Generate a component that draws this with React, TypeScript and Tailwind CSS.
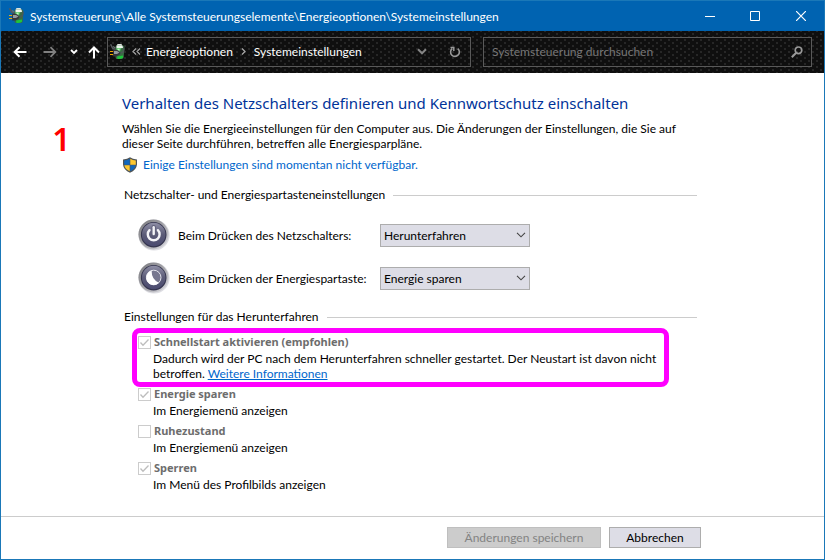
import React, { useState } from 'react';

const SHUTDOWN_OPTIONS = [
  { id: 'sleep', label: 'Energie sparen', hint: 'Im Energiemenü anzeigen', checked: true },
  { id: 'hibernate', label: 'Ruhezustand', hint: 'Im Energiemenü anzeigen', checked: false },
  { id: 'lock', label: 'Sperren', hint: 'Im Menü des Profilbilds anzeigen', checked: true },
];

const POWER_ACTIONS = ['Nichts unternehmen', 'Energie sparen', 'Ruhezustand', 'Herunterfahren'];

const BatteryIcon: React.FC = () => (
  <svg className="w-4 h-4 shrink-0" viewBox="0 0 16 16" aria-hidden="true">
    <path d="M.6.3 2.600 4.200 6 5.800" fill="none" stroke="#55595c" strokeWidth="1.500" />
    <path d="M3 2.500 5.500 4" stroke="#6a6e70" strokeWidth="1.300" />
    <rect x="7" y="0" width="5" height="3" rx="1" fill="#dfe6df" />
    <path d="M6.500 1.500h6.500q1.300 0 1.300 1.500l-.5 10q-.2 2-2 2H7q-1.500 0-1.500-2V3q0-1.500 1-1.500z" fill="#3a6b45" />
    <path d="M6.500 1.500h6l.5 2.500-6.500.5z" fill="#eef5ee" />
    <path d="M6.500 4.500 11 4 9.500 9H6z" fill="#5fd76c" />
    <path d="M7.800 4.800h1.800l-1 4H7.200z" fill="#c2f5c6" />
    <path d="M7 12.500 13 11.500v2.300q-2 1.500-5.500 1.200z" fill="#1fc63b" />
    <path d="M0 7.500h3.500M0 10.500h3.500" stroke="#f2a900" strokeWidth="1.200" />
    <path d="M3.200 5.800h3.300q3 .5 4.200 3.300-1.200 2.800-4.200 3.300H3.200z" fill="#33373a" />
    <path d="M4 7h3l2.500 1.500-2.500 1.500H4z" fill="#969b9f" />
    <path d="M10.500 9q4.200-.5 3.500-5.500" fill="none" stroke="#50565a" strokeWidth="1.200" />
  </svg>
);

const ShieldIcon: React.FC = () => (
  <svg className="w-4 h-4 shrink-0" viewBox="0 0 16 16" aria-hidden="true">
    <path d="M8 .3Q10.500 2.300 15 2.500V7.500Q14.500 13 8 15.800 1.500 13 1 7.500V2.500Q5.500 2.300 8 .3z" fill="#4f5456" />
    <path d="M7.700 1.700V7.700H2.200V3.600Q5.500 3.300 7.700 1.700z" fill="#1067bd" />
    <path d="M8.300 1.700V7.700H13.800V3.600Q10.500 3.300 8.300 1.700z" fill="#fdc830" />
    <path d="M2.300 8.200H7.700V14.300Q3 12 2.300 8.200z" fill="#fdc830" />
    <path d="M13.700 8.200H8.300V14.300Q13 12 13.700 8.200z" fill="#1067bd" />
  </svg>
);

const RoundButtonIcon: React.FC<{ kind: 'power' | 'sleep' }> = ({ kind }) => (
  <svg className="w-8 h-8 shrink-0" viewBox="0 0 32 32" aria-hidden="true">
    <defs>
      <linearGradient id={`rim-${kind}`} x1="0" y1="0" x2="1" y2="1">
        <stop offset="0" stopColor="#77777b" />
        <stop offset="0.5" stopColor="#a5a5aa" />
        <stop offset="1" stopColor="#dcdce2" />
      </linearGradient>
      <linearGradient id={`face-${kind}`} x1="0" y1="0" x2="0" y2="1">
        <stop offset="0" stopColor="#8f8fa6" />
        <stop offset="0.5" stopColor="#5c5c78" />
        <stop offset="1" stopColor="#4a4a70" />
      </linearGradient>
    </defs>
    <circle cx="16" cy="16" r="15.600" fill="#dedee3" />
    <circle cx="15.500" cy="15.500" r="15" fill={`url(#rim-${kind})`} />
    <circle cx="15.700" cy="15.700" r="12.800" fill="#34344e" />
    <circle cx="15.700" cy="15.500" r="11.800" fill={`url(#face-${kind})`} />
    {kind === 'power' ? (
      <g fill="none" stroke="#f4f4f8" strokeLinecap="round">
        <path d="M11.500 11.200a5.900 5.900 0 1 0 8.400 0" strokeWidth="2.400" />
        <path d="M15.700 8.300v6.700" stroke="#62627c" strokeWidth="4.400" />
        <path d="M15.700 8.300v6.700" strokeWidth="2.400" />
      </g>
    ) : (
      <g>
        <circle cx="15.700" cy="15.500" r="7.300" fill="#77778f" stroke="#e4e4ec" strokeWidth="1" />
        <path d="M13.600 8.500a7.400 7.400 0 1 0 7.300 12.300Q13.500 17.500 13.600 8.500z" fill="#fff" />
      </g>
    )}
  </svg>
);

const SectionTitle: React.FC<{ children: React.ReactNode }> = ({ children }) => (
  <div className="flex items-center gap-2 pl-0.5">
    <h2 className="leading-4 whitespace-nowrap">{children}</h2>
    <div className="h-px flex-1 bg-[#cccccc]" />
  </div>
);

interface ActionRowProps {
  id: string;
  kind: 'power' | 'sleep';
  label: string;
  initial: string;
}

const ActionRow: React.FC<ActionRowProps> = ({ id, kind, label, initial }) => {
  const [value, setValue] = useState(initial);

  return (
    <div className="flex items-center pl-4">
      <RoundButtonIcon kind={kind} />
      <label htmlFor={id} className="w-[202px] ml-2 whitespace-nowrap">{label}</label>
      <div className="grid w-[150px] items-center">
        <select
          id={id}
          value={value}
          onChange={(e) => setValue(e.target.value)}
          className="col-start-1 row-start-1 h-[23px] w-full appearance-none border border-[#adadad] bg-[#dddde6] pl-[3px] pr-6"
        >
          {POWER_ACTIONS.map((action) => (
            <option key={action}>{action}</option>
          ))}
        </select>
        <svg className="col-start-1 row-start-1 mr-1 h-[6px] w-[10px] justify-self-end pointer-events-none" viewBox="0 0 10 6" aria-hidden="true">
          <path d="M1 .8 5 4.800 9 .8" fill="none" stroke="#444" strokeWidth="1.100" />
        </svg>
      </div>
    </div>
  );
};

const OptionCheckbox: React.FC<{ id: string; label: string; checked: boolean }> = ({ id, label, checked }) => (
  <div className="flex items-center gap-[3px]">
    <span className="grid">
      <input
        id={id}
        type="checkbox"
        disabled
        defaultChecked={checked}
        className="peer col-start-1 row-start-1 h-[13px] w-[13px] appearance-none border border-[#cccccc] bg-white"
      />
      <svg className="invisible col-start-1 row-start-1 h-[13px] w-[13px] pointer-events-none peer-checked:visible" viewBox="0 0 13 13" aria-hidden="true">
        <path d="M2.500 6.500 5 9.200 10.500 3.500" fill="none" stroke="#bdbdbd" strokeWidth="1.300" />
      </svg>
    </span>
    <label htmlFor={id} className="font-['Noto_Sans',sans-serif] text-[11px] font-bold leading-4 text-[#6d6d6d]">{label}</label>
  </div>
);

const TitleBar: React.FC = () => (
  <header className="flex h-[30px] items-center bg-[#0063b1] pl-2 text-white">
    <BatteryIcon />
    <h1 className="ml-[5px] flex-1 truncate">Systemsteuerung\Alle Systemsteuerungselemente\Energieoptionen\Systemeinstellungen</h1>
    <button type="button" aria-label="Minimieren" className="flex h-full w-11 items-center justify-center">
      <svg width="10" height="10" viewBox="0 0 10 10"><path d="M0 5.500h10" stroke="#fff" /></svg>
    </button>
    <button type="button" aria-label="Maximieren" className="flex h-full w-[46px] items-center justify-center">
      <svg width="10" height="10" viewBox="0 0 10 10"><path d="M.5.5h9v9h-9z" fill="none" stroke="#fff" /></svg>
    </button>
    <button type="button" aria-label="Schließen" className="flex h-full w-[46px] items-center justify-center">
      <svg width="10" height="10" viewBox="0 0 10 10"><path d="M0 0 10 10M10 0 0 10" stroke="#fff" strokeWidth="1.200" /></svg>
    </button>
  </header>
);

const NavBar: React.FC = () => (
  <div className="flex h-[42px] items-center bg-[#0f0f0f] bg-[radial-gradient(#2c2c2c_0.8px,transparent_1px),radial-gradient(#2c2c2c_0.8px,transparent_1px)] bg-[size:8px_6px] bg-[position:0_0,4px_3px] pl-3 pr-3 pb-px text-white">
    <button type="button" aria-label="Zurück">
      <svg width="14" height="12" viewBox="0 0 14 12"><path d="M13.500 6H1.800M6.500 1.200 1.700 6l4.800 4.800" fill="none" stroke="#fff" strokeWidth="2" /></svg>
    </button>
    <button type="button" aria-label="Vorwärts" className="ml-4">
      <svg width="14" height="12" viewBox="0 0 14 12"><path d="M.5 6h11.700M7.500 1.200 12.300 6l-4.800 4.800" fill="none" stroke="#808080" strokeWidth="1.800" /></svg>
    </button>
    <button type="button" aria-label="Zuletzt besuchte Orte" className="ml-3">
      <svg width="10" height="6" viewBox="0 0 10 6"><path d="M2 1l3 3 3-3" fill="none" stroke="#fff" strokeWidth="1.800" /></svg>
    </button>
    <button type="button" aria-label="Nach oben" className="ml-2">
      <svg width="14" height="14" viewBox="0 0 14 14"><path d="M7 13.500V2.500M2 7.500l5-5 5 5" fill="none" stroke="#fff" strokeWidth="2" /></svg>
    </button>

    <nav aria-label="Adresse" className="ml-[6px] flex h-[30px] w-[364px] items-center border border-[#5a5a5a] pl-0.5">
      <BatteryIcon />
      <svg className="ml-[6px]" width="9" height="7" viewBox="0 0 9 7" aria-hidden="true">
        <path d="M4 .5 1 3.500l3 3M8 .5 5 3.500l3 3" fill="none" stroke="#aaa" strokeWidth="1.100" />
      </svg>
      <a href="#energieoptionen" className="ml-[5px]">Energieoptionen</a>
      <svg className="mx-2" width="5" height="7" viewBox="0 0 5 7" aria-hidden="true">
        <path d="M1 .5 4 3.500l-3 3" fill="none" stroke="#aaa" strokeWidth="1.200" />
      </svg>
      <a href="#systemeinstellungen">Systemeinstellungen</a>
      <div className="flex-1" />
      <button type="button" aria-label="Vorherige Orte">
        <svg width="10" height="7" viewBox="0 0 10 7"><path d="M1 1.300l4 4 4-4" fill="none" stroke="#858585" strokeWidth="2" /></svg>
      </button>
      <button type="button" aria-label="Aktualisieren" className="ml-[22px] mr-[9px]">
        <svg width="12" height="12" viewBox="0 0 12 12">
          <path d="M3.300 2.500A4.400 4.400 0 1 0 8.800 2.600" fill="none" stroke="#999" strokeWidth="1.600" />
          <path d="M1.500 1.600H4.800V5" fill="none" stroke="#999" strokeWidth="1.500" />
        </svg>
      </button>
    </nav>

    <div className="ml-3 flex h-[30px] flex-1 items-center border border-[#5a5a5a] px-2">
      <input
        type="search"
        aria-label="Systemsteuerung durchsuchen"
        placeholder="Systemsteuerung durchsuchen"
        className="min-w-0 flex-1 bg-transparent placeholder:text-[#777777] placeholder:opacity-100 outline-none"
      />
      <svg width="12" height="12" viewBox="0 0 12 12" aria-hidden="true">
        <circle cx="7.500" cy="4.300" r="3.300" fill="none" stroke="#999" strokeWidth="1.700" />
        <path d="M5.200 6.800.8 11.200" stroke="#999" strokeWidth="2" />
      </svg>
    </div>
  </div>
);

export default function App() {
  return (
    <div className="flex min-h-screen flex-col border border-[#1a78b8] bg-white font-[Lato,sans-serif] text-[12px] leading-[15px] text-black">
      <TitleBar />
      <NavBar />

      <main className="flex flex-1 pb-6">
        <aside className="w-[121px] shrink-0 pt-[46px] text-center font-['Noto_Sans',sans-serif] text-[32px] font-semibold leading-10 text-[#ff0000]">1</aside>

        <div className="w-full max-w-[575px]">
          <h2 className="pt-[19px] font-['Noto_Sans',sans-serif] text-[15px] leading-[22px] text-[#003399]">
            Verhalten des Netzschalters definieren und Kennwortschutz einschalten
          </h2>
          <p className="mt-[7px]">
            Wählen Sie die Energieeinstellungen für den Computer aus. Die Änderungen der Einstellungen, die Sie auf
            dieser Seite durchführen, betreffen alle Energiesparpläne.
          </p>
          <a href="#einstellungen" className="mt-[6px] flex w-fit items-center gap-[5px] leading-4 text-[#0066cc]">
            <ShieldIcon />
            Einige Einstellungen sind momentan nicht verfügbar.
          </a>

          <section className="mt-[14px]">
            <SectionTitle>Netzschalter- und Energiespartasteneinstellungen</SectionTitle>
            <div className="mt-4 flex flex-col gap-[11px]">
              <ActionRow id="power-button" kind="power" label="Beim Drücken des Netzschalters:" initial="Herunterfahren" />
              <ActionRow id="sleep-button" kind="sleep" label="Beim Drücken der Energiespartaste:" initial="Energie sparen" />
            </div>
          </section>

          <section className="mt-[15px]">
            <SectionTitle>Einstellungen für das Herunterfahren</SectionTitle>
            <div className="mt-[9px] flex flex-col gap-[5px] pl-4">
              <div className="relative">
                <OptionCheckbox id="fast-startup" label="Schnellstart aktivieren (empfohlen)" checked />
                <p className="mt-px max-w-[530px] pl-[15px]">
                  Dadurch wird der PC nach dem Herunterfahren schneller gestartet. Der Neustart ist davon nicht
                  betroffen. <a href="#info" className="text-[#0066cc] underline">Weitere Informationen</a>
                </p>
                {/* Highlight frame around the fast startup option */}
                <div className="pointer-events-none absolute -top-1.5 -bottom-1.5 -left-1.5 w-[537px] rounded-lg border-[5px] border-[#ff00ff]" />
              </div>
              {SHUTDOWN_OPTIONS.map((option) => (
                <div key={option.id}>
                  <OptionCheckbox id={option.id} label={option.label} checked={option.checked} />
                  <p className="mt-px pl-[15px]">{option.hint}</p>
                </div>
              ))}
            </div>
          </section>
        </div>
      </main>

      <footer className="border-t border-[#cccccc] pt-[10px] pb-[11px]">
        {/* Buttons line up with the right edge of the content column */}
        <div className="flex max-w-[700px] justify-end gap-2">
          <button type="button" disabled className="h-[21px] w-[154px] border border-[#bfbfbf] bg-[#cccccc] text-[#838383]">
            Änderungen speichern
          </button>
          <button type="button" className="h-[21px] w-[92px] border border-[#adadad] bg-[#dddde6]">
            Abbrechen
          </button>
        </div>
      </footer>
    </div>
  );
}
